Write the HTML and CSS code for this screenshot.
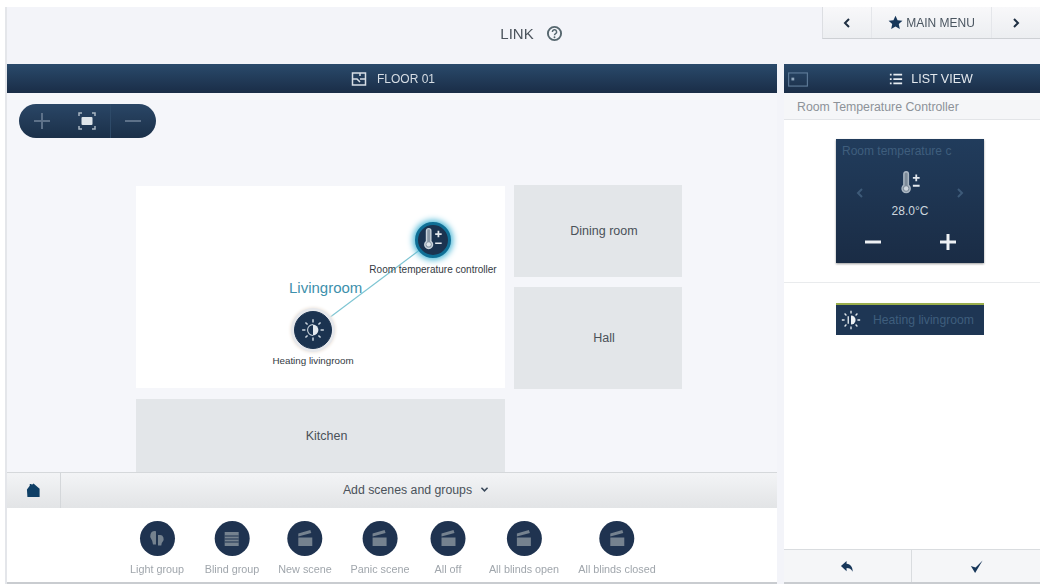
FILE: index.html
```html
<!DOCTYPE html>
<html lang="en">

<head>
    <meta charset="UTF-8">
    <meta name="viewport" content="width=device-width, initial-scale=1.0">
    <title>Link</title>
    <link rel="stylesheet" href="styles.css">
</head>

<body>
    <div class="app">
        <header class="top">
            <div class="top-title">
                <span>LINK</span>
                <svg class="help" viewBox="0 0 16 16"><circle cx="8" cy="8" r="6.2" fill="none" stroke="#56676f" stroke-width="1.8"/><path d="M6 6.500a2 2 0 1 1 3 1.700c-.7.400-1 .8-1 1.500" fill="none" stroke="#56676f" stroke-width="1.4"/><circle cx="8" cy="11.600" r=".9" fill="#56676f"/></svg>
            </div>
            <nav class="top-nav">
                <div class="nav-btn nav-side"><svg class="chev" viewBox="0 0 8 12"><path d="M6 2 2 6l4 4" /></svg></div>
                <div class="nav-btn nav-main">
                    <svg class="star" viewBox="0 0 16 16"><path d="M8 .8l2.200 4.800 5.200.6-3.900 3.500 1.100 5.200L8 12.300l-4.600 2.600 1.100-5.200L.6 6.200l5.200-.6z" fill="#17375a"/></svg>
                    <span>MAIN MENU</span>
                </div>
                <div class="nav-btn nav-side"><svg class="chev" viewBox="0 0 8 12"><path d="M2 2l4 4-4 4" /></svg></div>
            </nav>
        </header>

        <div class="panels">
            <section class="left">
                <div class="bar bar-left">
                    <svg class="bar-icon" viewBox="0 0 16 16"><path d="M1.500 2h13v12h-13zM1.500 8h5M9 8h5.500M6 8l3 3M9 2v3" fill="none" stroke="#d7dee6" stroke-width="1.500"/></svg>
                    <span>FLOOR 01</span>
                </div>

                <div class="plan">
                    <div class="zoom-pill">
                        <svg class="zoom-ico" viewBox="0 0 20 20"><path d="M10 2v16M2 10h16" stroke="#5d7189" stroke-width="2"/></svg>
                        <svg class="zoom-ico zoom-fit" viewBox="0 0 20 20"><rect x="4.500" y="6" width="11" height="8" rx="1" fill="#dfe5ea"/><path d="M2 5V2h3M15 2h3v3M18 15v3h-3M5 18H2v-3" fill="none" stroke="#a9b6c2" stroke-width="1.500"/></svg>
                        <i class="pill-sep"></i>
                        <svg class="zoom-ico" viewBox="0 0 20 20"><path d="M2 10h16" stroke="#5d7189" stroke-width="2"/></svg>
                    </div>

                    <div class="room room-living"></div>
                    <div class="room room-dining">Dining room</div>
                    <div class="room room-hall">Hall</div>
                    <div class="room room-kitchen">Kitchen</div>

                    <svg class="link-line" viewBox="0 0 120 90"><path d="M0 90 120 0" stroke="#7cc4d2" stroke-width="1.200"/></svg>
                    <div class="room-name">Livingroom</div>

                    <div class="node node-temp">
                        <div class="disc disc-temp">
                            <svg viewBox="0 0 24 24" class="disc-ico"><path d="M6 3.500a2 2 0 0 1 4 0v9.700a3.600 3.600 0 1 1-4 0z" fill="#8a98a6" stroke="#c9d3dc" stroke-width="1.300"/><circle cx="8" cy="16" r="2" fill="#dfe5ea"/><path d="M14 6.500h6M17 3.500v6M14 15h6" stroke="#e4e9ee" stroke-width="1.600"/></svg>
                        </div>
                        <span>Room temperature controller</span>
                    </div>
                    <div class="node node-heat">
                        <div class="disc disc-heat">
                            <svg viewBox="0 0 24 24" class="disc-ico"><path d="M12 7a5 5 0 0 1 0 10z" fill="#e4e9ee"/><path d="M12 7a5 5 0 0 0 0 10" fill="none" stroke="#c9d3dc"/><path d="M12 2v3M12 19v3M2 12h3M19 12h3M5 5l2 2M17 17l2 2M5 19l2-2M17 7l2-2" stroke="#c9d3dc" stroke-width="1.400"/></svg>
                        </div>
                        <span>Heating livingroom</span>
                    </div>
                </div>

                <div class="add-bar">
                    <div class="home-btn"><svg viewBox="0 0 16 16"><path d="M1 7l3-4V1h2v1l2-1.500L14.500 6v9H1.500z" fill="#0f3f66"/></svg></div>
                    <div class="add-text">
                        <span>Add scenes and groups</span>
                        <svg class="add-chev" viewBox="0 0 10 8"><path d="M1.500 2 5 5.500 8.500 2" /></svg>
                    </div>
                </div>

                <div class="scenes">
                    <div class="scene scene-1">
                        <div class="scene-disc"><svg viewBox="0 0 24 24"><path d="M9.500 4a4.500 5 0 0 0-3 8.500c1 1.200 1 3 1.500 5h3V4.200zM15 8a3.500 4 0 0 1 2.500 7c-1 1-.8 2-1.200 3.500H13V8z" fill="#75828f"/></svg></div>
                        <span>Light group</span>
                    </div>
                    <div class="scene scene-2">
                        <div class="scene-disc"><svg viewBox="0 0 24 24"><path d="M5 5h14v14H5z" fill="#75828f"/><path d="M5 9h14M5 12h14M5 15h14" stroke="#1f3350"/></svg></div>
                        <span>Blind group</span>
                    </div>
                    <div class="scene scene-3">
                        <div class="scene-disc"><svg viewBox="0 0 24 24"><use href="#clap"/></svg></div>
                        <span>New scene</span>
                    </div>
                    <div class="scene scene-4">
                        <div class="scene-disc"><svg viewBox="0 0 24 24"><use href="#clap"/></svg></div>
                        <span>Panic scene</span>
                    </div>
                    <div class="scene scene-5">
                        <div class="scene-disc"><svg viewBox="0 0 24 24"><use href="#clap"/></svg></div>
                        <span>All off</span>
                    </div>
                    <div class="scene scene-6">
                        <div class="scene-disc"><svg viewBox="0 0 24 24"><use href="#clap"/></svg></div>
                        <span>All blinds open</span>
                    </div>
                    <div class="scene scene-7">
                        <div class="scene-disc"><svg viewBox="0 0 24 24"><use href="#clap"/></svg></div>
                        <span>All blinds closed</span>
                    </div>
                </div>
            </section>

            <aside class="right">
                <div class="bar bar-right">
                    <svg class="bar-small" viewBox="0 0 22 16"><rect x="1" y="1" width="20" height="14" fill="none" stroke="#5f7c99" stroke-width="1.200"/><rect x="4" y="6" width="3" height="3" fill="#8ea5bb"/></svg>
                    <svg class="bar-icon" viewBox="0 0 16 16"><path d="M1 3h2M1 8h2M1 13h2M5 3h10M5 8h10M5 13h10" stroke="#e8edf2" stroke-width="2"/></svg>
                    <span>LIST VIEW</span>
                </div>
                <div class="sub-head">Room Temperature Controller</div>

                <div class="tile-zone">
                    <div class="tile">
                        <div class="tile-title">Room temperature c</div>
                        <div class="tile-mid">
                            <svg class="tile-chev" viewBox="0 0 8 12"><path d="M6 2 2 6l4 4"/></svg>
                            <div class="tile-value">
                                <svg viewBox="0 0 24 24"><path d="M7 3.500a2 2 0 0 1 4 0v10a3.600 3.600 0 1 1-4 0z" fill="#7c8a98" stroke="#aab6c2" stroke-width="1.300"/><circle cx="9" cy="16.500" r="2" fill="#cfd7de"/><path d="M15 7h6M18 4v6M15 14h6" stroke="#e4e9ee" stroke-width="1.600"/></svg>
                                <span>28.0°C</span>
                            </div>
                            <svg class="tile-chev" viewBox="0 0 8 12"><path d="M2 2l4 4-4 4"/></svg>
                        </div>
                        <div class="tile-btns">
                            <svg viewBox="0 0 20 20"><path d="M2 10h16" stroke="#eef1f4" stroke-width="3"/></svg>
                            <svg viewBox="0 0 20 20"><path d="M2 10h16M10 2v16" stroke="#eef1f4" stroke-width="3"/></svg>
                        </div>
                    </div>
                </div>

                <div class="strip-zone">
                    <div class="strip">
                        <svg viewBox="0 0 24 24"><path d="M12 7a5 5 0 0 1 0 10z" fill="#eef1f4"/><path d="M12 2v3M12 19v3M2 12h3M19 12h3M5 5l2 2M17 17l2 2M5 19l2-2M17 7l2-2M9 8v8" stroke="#dfe5ea" stroke-width="1.500"/></svg>
                        <span>Heating livingroom</span>
                    </div>
                </div>

                <div class="right-foot">
                    <div class="foot-btn foot-back"><svg viewBox="0 0 16 16"><path d="M7 2 1 7.500 7 13V9.500c3 0 5 1 6.500 4 0-5-2-8-6.500-8.500z" fill="#17375a"/></svg></div>
                    <div class="foot-btn"><svg viewBox="0 0 16 16"><path d="M2 7.500 6.500 15 14.500 1.500 7 9z" fill="#17375a"/></svg></div>
                </div>
            </aside>
        </div>
    </div>

    <svg class="defs" width="0" height="0">
        <symbol id="clap" viewBox="0 0 24 24">
            <path d="M5 10.500h14V19H5zM5 6.500 17 3l1 3-13 3.500z" fill="#75828f"/>
        </symbol>
    </svg>
</body>

</html>
```

FILE: styles.css
```css
* {
    box-sizing: border-box;
}

html,
body {
    margin: 0;
    padding: 0;
    width: 1043px;
    height: 587px;
    overflow: hidden;
    background-color: #fff;
}

body {
    font-family: 'Liberation Sans', Arial, sans-serif;
    color: #444c55;
    padding: 7px 3px 2px 7px;
}

.defs {
    position: absolute;
}

/* the source is a soft video frame, so everything is slightly blurred */
.app {
    height: 577px;
    background-color: #f3f4f9;
    display: flex;
    flex-direction: column;
    box-shadow: -2px 0 0 #e4e6ea;
    filter: blur(0.5px);
}

.top {
    height: 57px;
    display: flex;
    position: relative;
}

.top-title {
    flex: 1;
    padding-top: 18px;
    padding-left: 16px;
    display: flex;
    justify-content: center;
    align-items: flex-start;
    gap: 12px;
    font-size: 15px;
    color: #4b535c;
}

.help {
    width: 17px;
    height: 17px;
}

.top-nav {
    position: absolute;
    top: 0;
    right: 0;
    width: 218px;
    height: 32px;
    display: flex;
    border-bottom: 1px solid #cdd0d4;
    border-left: 1px solid #dcdee2;
    background: linear-gradient(#f8f8fa, #eceef1);
}

.nav-btn {
    display: flex;
    align-items: center;
    justify-content: center;
    gap: 3px;
    font-size: 12px;
    color: #4a5560;
}

.nav-side {
    width: 48px;
}

.nav-main {
    flex: 1;
    border-left: 1px solid #e4e6ea;
    border-right: 1px solid #e4e6ea;
}

.chev {
    width: 8px;
    height: 12px;
}

.chev path {
    fill: none;
    stroke: #1f2f42;
    stroke-width: 2;
}

.star {
    width: 15px;
    height: 15px;
}

.panels {
    flex: 1;
    display: flex;
    gap: 7px;
    min-height: 0;
}

.left {
    width: 770px;
    display: flex;
    flex-direction: column;
    border-bottom: 2px solid #c9ccd0;
}

.right {
    flex: 1;
    display: flex;
    flex-direction: column;
    background-color: #fff;
    border-bottom: 2px solid #c9ccd0;
}

.bar {
    height: 29px;
    flex: none;
    display: flex;
    align-items: center;
    justify-content: center;
    gap: 6px;
    position: relative;
    background: linear-gradient(#2a4a6b, #1a2d47);
    color: #d6dde4;
    font-size: 12px;
}

.bar-left {
    gap: 10px;
    padding-left: 2px;
}

.bar-left .bar-icon {
    width: 16px;
    height: 16px;
}

.bar-icon {
    width: 14px;
    height: 14px;
}

.bar-right {
    font-size: 12.500px;
    gap: 8px;
    padding-left: 38px;
    color: #e4e9ee;
}

.bar-small {
    position: absolute;
    left: 3px;
    top: 8px;
    width: 22px;
    height: 15px;
}

.plan {
    height: 379px;
    flex: none;
    position: relative;
    overflow: hidden;
    background-color: #f5f6fa;
}

.zoom-pill {
    position: absolute;
    left: 12px;
    top: 11px;
    width: 137px;
    height: 34px;
    border-radius: 17px;
    background: linear-gradient(#2a4666, #1b3049);
    display: flex;
    align-items: center;
    padding-left: 13px;
    gap: 0;
}

.zoom-ico {
    width: 20px;
    height: 20px;
}

.zoom-fit {
    margin-left: 25px;
}

.pill-sep {
    width: 1px;
    height: 34px;
    margin: 0 12px 0 13px;
    background-color: #2e4a68;
}

.room {
    position: absolute;
    display: flex;
    align-items: center;
    justify-content: center;
    padding-left: 12px;
    background-color: #e3e6e9;
    font-size: 12.500px;
    color: #4a5158;
}

.room-living {
    left: 129px;
    top: 93px;
    width: 369px;
    height: 202px;
    background-color: #fff;
}

.room-dining {
    left: 507px;
    top: 92px;
    width: 168px;
    height: 92px;
}

.room-hall {
    left: 507px;
    top: 194px;
    width: 168px;
    height: 102px;
}

.room-kitchen {
    left: 129px;
    top: 306px;
    width: 369px;
    height: 73px;
}

.link-line {
    position: absolute;
    left: 306px;
    top: 147px;
    width: 120px;
    height: 90px;
}

.room-name {
    position: absolute;
    left: 282px;
    top: 186px;
    font-size: 15px;
    color: #3d90ac;
}

.node {
    position: absolute;
    display: flex;
    flex-direction: column;
    align-items: center;
    font-size: 9.800px;
    color: #333a42;
    white-space: nowrap;
}

.node-temp {
    left: 360px;
    top: 129px;
    width: 132px;
    gap: 6px;
    font-size: 10px;
}

.node-heat {
    left: 256px;
    top: 218px;
    width: 100px;
    gap: 6px;
}

.disc {
    width: 36px;
    height: 36px;
    border-radius: 50%;
    background-color: #1b3350;
    display: flex;
    align-items: center;
    justify-content: center;
}

.disc-temp {
    border: 3px solid #0f6f96;
    box-shadow: 0 0 6px 2px #49b6d6;
}

.disc-heat {
    width: 38px;
    height: 38px;
    border: 1px solid #1b3350;
    box-shadow: 0 0 0 3px #e6e8ec, 0 0 3px 4px #f0e9e2;
}

.disc-ico {
    width: 26px;
    height: 26px;
}

.add-bar {
    height: 36px;
    flex: none;
    display: flex;
    background: linear-gradient(#f3f4f6, #e2e4e6);
    border-top: 1px solid #d5d8db;
}

.home-btn {
    width: 54px;
    display: flex;
    align-items: center;
    justify-content: center;
    border-right: 1px solid #d4d7da;
}

.home-btn svg {
    width: 15px;
    height: 15px;
}

.add-text {
    flex: 1;
    display: flex;
    align-items: center;
    justify-content: center;
    gap: 8px;
    padding: 0 6px 2px 0;
    font-size: 12.300px;
    color: #4a525a;
}

.add-chev {
    width: 9px;
    height: 7px;
}

.add-chev path {
    fill: none;
    stroke: #39485a;
    stroke-width: 1.800;
}

.scenes {
    flex: 1;
    position: relative;
    background-color: #fff;
}

.scene {
    position: absolute;
    top: 13px;
    display: flex;
    flex-direction: column;
    align-items: center;
    gap: 7px;
    transform: translateX(-50%);
    font-size: 10.800px;
    color: #a0a6ac;
    white-space: nowrap;
}

.scene-1 { left: 150px; }
.scene-2 { left: 225px; }
.scene-3 { left: 298px; }
.scene-4 { left: 373px; }
.scene-5 { left: 441px; }
.scene-6 { left: 517px; }
.scene-7 { left: 610px; }

.scene-disc {
    width: 35px;
    height: 35px;
    border-radius: 50%;
    background-color: #1f3350;
    display: flex;
    align-items: center;
    justify-content: center;
}

.scene-disc svg {
    width: 24px;
    height: 24px;
}

.sub-head {
    height: 27px;
    flex: none;
    padding: 7px 0 0 13px;
    font-size: 12.300px;
    color: #8d9298;
    background-color: #f5f6f8;
    border-bottom: 1px solid #e3e5e8;
}

.tile-zone {
    height: 163px;
    flex: none;
    padding: 19px 0 0 52px;
    border-bottom: 1px solid #e9ebed;
}

.tile {
    width: 148px;
    height: 124px;
    padding: 5px 6px 0;
    background: linear-gradient(#213c5c, #1a2c45);
    box-shadow: 0 1px 2px rgba(0, 0, 0, 0.4);
}

.tile-title {
    font-size: 12px;
    color: #3f5e7d;
    white-space: nowrap;
}

.tile-mid {
    display: flex;
    justify-content: space-between;
    align-items: flex-start;
    padding: 12px 14px 0;
}

.tile-chev {
    width: 8px;
    height: 12px;
    margin-top: 17px;
}

.tile-chev path {
    fill: none;
    stroke: #3d5a78;
    stroke-width: 2;
}

.tile-value {
    display: flex;
    flex-direction: column;
    align-items: center;
    gap: 7px;
    font-size: 12px;
    color: #cdd6de;
}

.tile-value svg {
    width: 27px;
    height: 27px;
}

.tile-btns {
    display: flex;
    justify-content: space-between;
    padding: 14px 20px 0 21px;
}

.tile-btns svg {
    width: 20px;
    height: 20px;
}

.strip-zone {
    flex: 1;
    padding: 20px 0 0 52px;
}

.strip {
    width: 148px;
    height: 32px;
    display: flex;
    align-items: center;
    gap: 11px;
    padding-left: 4px;
    background-color: #1e3654;
    border-top: 2px solid #9aae4c;
    font-size: 12.200px;
    color: #3f5e7d;
    white-space: nowrap;
    overflow: hidden;
}

.strip svg {
    width: 22px;
    height: 22px;
}

.right-foot {
    height: 33px;
    flex: none;
    display: flex;
    background-color: #f5f6f8;
    border-top: 1px solid #d9dcdf;
}

.foot-btn {
    flex: 1;
    display: flex;
    align-items: center;
    justify-content: center;
}

.foot-back {
    flex: none;
    width: 127px;
}

.foot-btn + .foot-btn {
    border-left: 1px solid #d9dcdf;
}

.foot-btn svg {
    width: 15px;
    height: 15px;
}
```
